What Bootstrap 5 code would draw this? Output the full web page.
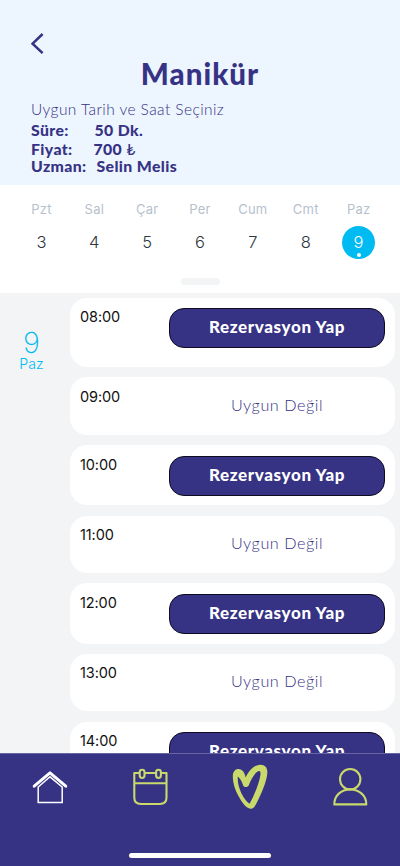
<!DOCTYPE html>
<html lang="tr">
<head>
<meta charset="utf-8">
<meta name="viewport" content="width=device-width, initial-scale=1">
<title>Manikür</title>
<link rel="stylesheet" href="https://cdn.jsdelivr.net/npm/bootstrap@5.3.0/dist/css/bootstrap.min.css">
<style>
:root{--navy:#363284;--sky:#00bbf2;--lime:#c9d96c}
body{font-family:Inter,"Liberation Sans",sans-serif;background:#f2f4f5}
.screen{height:866px}
.brand-font{font-family:Lato,"Liberation Sans",sans-serif;color:var(--navy)}
.top-area{height:185px;background:#edf5ff;padding:32px 31px 0}
.back-btn{height:24px;line-height:0}
.page-title{font-size:29.5px;font-weight:900;line-height:36px;letter-spacing:1.05px;margin-top:-.5px}
.hint{font-size:15.5px;line-height:20px;letter-spacing:.42px;margin-top:7.5px;font-weight:300}
.info-line{font-size:15.8px;font-weight:900;white-space:pre;letter-spacing:.38px}
.l1{line-height:20px;margin-top:1px}.l2{line-height:18px}.l3{line-height:16px}
.info-label{width:63.5px}
.l2 .info-label{width:62.5px}
.l3 .info-label{width:65.5px}
.week{height:107.5px;padding:15px 15px 0}
.day-name{font-size:13px;line-height:19px;color:#b6c1cd;letter-spacing:.2px}
.day-num{width:33px;height:33px;margin-top:7px;font-size:16.5px;font-weight:300;line-height:33px;color:#2d3640}
.day-num.on{background:var(--sky);color:#fff}
.dot{width:4px;height:4px;bottom:2.5px}
.knob{width:39px;height:7px;background:#f2f4f5;margin-top:19px}
.agenda{height:460.5px}
.side{width:63px;color:var(--sky);padding-top:35px}
.side-num{font-size:29px;line-height:30px;font-weight:200}
.side-name{font-size:14.2px;line-height:14px;font-weight:300;margin-top:-1px}
.slots{padding:5px 5px 0 7px;gap:10.3px}
.slot{height:57.5px;border-radius:17px;padding:10.5px 10px 0 10px}
.slot.open{height:60.2px}
.slot.first{height:69.5px}
.hour{font-size:14.5px;line-height:17.5px;color:#111;letter-spacing:-.1px}
.action{width:216px;height:40px;flex:none}
.book{background:var(--navy)!important;color:#fff!important;border:1.3px solid #0d0b20!important;border-radius:15px;font-size:17px;font-weight:900;line-height:34.5px;letter-spacing:.62px;padding-bottom:1.5px!important}
.closed-slot{font-size:16.2px;line-height:33.5px;letter-spacing:.55px;font-weight:300}
.tabs{height:113px;background:var(--navy);border-top:1px solid #6965a5;padding-top:8px}
.home-bar{width:142px;height:5px;margin-top:42.5px}
.tabs svg,.back-btn svg{display:block}
</style>
</head>
<body>
<div class="screen d-flex flex-column overflow-hidden">
  <header class="top-area brand-font flex-shrink-0">
    <div class="back-btn"><svg width="14" height="24" viewBox="0 0 14 24" fill="none" stroke="#363284" stroke-width="2.5"><path d="M11.600 2 1.600 11.700l10 9.500"/></svg></div>
    <h1 class="page-title text-center mb-0">Manikür</h1>
    <div class="hint">Uygun Tarih ve Saat Seçiniz</div>
    <div class="info-line l1 d-flex"><span class="info-label">Süre:</span><span>50 Dk.</span></div>
    <div class="info-line l2 d-flex"><span class="info-label">Fiyat:</span><span>700 <span class="fw-normal">₺</span></span></div>
    <div class="info-line l3 d-flex"><span class="info-label">Uzman:</span><span>Selin Melis</span></div>
  </header>
  <section class="week bg-white flex-shrink-0">
    <div class="row g-0 text-center flex-nowrap">
      <div class="col"><div class="day-name">Pzt</div><div class="day-num mx-auto">3</div></div>
      <div class="col"><div class="day-name">Sal</div><div class="day-num mx-auto">4</div></div>
      <div class="col"><div class="day-name">Çar</div><div class="day-num mx-auto">5</div></div>
      <div class="col"><div class="day-name">Per</div><div class="day-num mx-auto">6</div></div>
      <div class="col"><div class="day-name">Cum</div><div class="day-num mx-auto">7</div></div>
      <div class="col"><div class="day-name">Cmt</div><div class="day-num mx-auto">8</div></div>
      <div class="col"><div class="day-name">Paz</div><div class="day-num on mx-auto rounded-circle position-relative">9<span class="dot bg-white rounded-circle position-absolute start-50 translate-middle-x"></span></div></div>
    </div>
    <div class="knob rounded-pill mx-auto"></div>
  </section>
  <main class="agenda d-flex overflow-hidden flex-shrink-0">
    <div class="side text-center flex-shrink-0"><div class="side-num">9</div><div class="side-name">Paz</div></div>
    <div class="slots d-flex flex-column flex-grow-1">
      <div class="slot open first bg-white d-flex justify-content-between flex-shrink-0"><span class="hour">08:00</span><button class="action btn book brand-font p-0">Rezervasyon Yap</button></div>
      <div class="slot bg-white d-flex justify-content-between flex-shrink-0"><span class="hour">09:00</span><div class="action closed-slot brand-font text-center">Uygun Değil</div></div>
      <div class="slot open bg-white d-flex justify-content-between flex-shrink-0"><span class="hour">10:00</span><button class="action btn book brand-font p-0">Rezervasyon Yap</button></div>
      <div class="slot bg-white d-flex justify-content-between flex-shrink-0"><span class="hour">11:00</span><div class="action closed-slot brand-font text-center">Uygun Değil</div></div>
      <div class="slot open bg-white d-flex justify-content-between flex-shrink-0"><span class="hour">12:00</span><button class="action btn book brand-font p-0">Rezervasyon Yap</button></div>
      <div class="slot bg-white d-flex justify-content-between flex-shrink-0"><span class="hour">13:00</span><div class="action closed-slot brand-font text-center">Uygun Değil</div></div>
      <div class="slot open bg-white d-flex justify-content-between flex-shrink-0"><span class="hour">14:00</span><button class="action btn book brand-font p-0">Rezervasyon Yap</button></div>
    </div>
  </main>
  <nav class="tabs flex-shrink-0">
    <div class="row g-0">
      <div class="col d-flex justify-content-center"><svg width="40" height="48" viewBox="0 0 40 48" fill="none" stroke="#fff"><path stroke-width="2.900" stroke-linecap="round" stroke-linejoin="round" d="M4.200 24.200 20 10.800l15.800 13.400"/><path stroke-width="1.500" d="M8.200 25V40.500h24V25L20 14.800z"/></svg></div>
      <div class="col d-flex justify-content-center"><svg width="40" height="48" viewBox="0 0 40 48" fill="none" stroke="#c9d96c" stroke-width="2.100"><path stroke-linejoin="round" d="M9.600 11H4.300v24.500q0 6.500 6.500 6.500h19q6.700 0 6.700-6.500V11h-5.500M14.800 11h11M4.300 21.300h32.200"/><rect x="9.700" y="7.800" width="4.800" height="8.200" rx="2.400"/><rect x="26.100" y="7.800" width="4.800" height="8.200" rx="2.400"/></svg></div>
      <div class="col d-flex justify-content-center"><svg width="40" height="48" viewBox="0 0 40 48"><path fill="#c9d96c" fill-rule="evenodd" d="M2.800 14C2.800 8.500 7 5.600 11.200 7.800c2.500 1.300 3.700 4.300 4.500 7.700C18.700 9 23.500 3.200 30.300 2.800c5-.2 7.500 3.400 7 8.700-.7 8.300-6 20.500-11.200 30.500-1.700 3.500-3.500 5-5.700 4.800-4-.5-8.600-6.300-11.800-12.500C4.900 27.600 2.700 20.800 2.800 14ZM7.800 14.500c-.6 6.600 1.800 14.200 5.500 20.300 2 3.300 4.100 5.700 6.300 7 4.800-8.800 9.900-21.200 10.900-29.500.2-2.500-.5-3.700-1.800-3.200-4.200 1.600-7.700 8.400-9.800 14-1.200 2.900-5.500 2.500-6-.3C12 19.500 10.300 16.500 7.800 14.500Z"/></svg></div>
      <div class="col d-flex justify-content-center"><svg width="40" height="48" viewBox="0 0 40 48" fill="none" stroke="#c9d96c" stroke-width="2.100"><circle cx="20.200" cy="17.200" r="10.200"/><path stroke-linejoin="round" d="M4.300 42.400C4.300 33.500 11 27.500 20.200 27.500S36.300 33.500 36.300 42.400z"/></svg></div>
    </div>
    <div class="home-bar bg-white rounded-pill mx-auto"></div>
  </nav>
</div>
<script src="https://cdn.jsdelivr.net/npm/bootstrap@5.3.0/dist/js/bootstrap.bundle.min.js"></script>
</body>
</html>
